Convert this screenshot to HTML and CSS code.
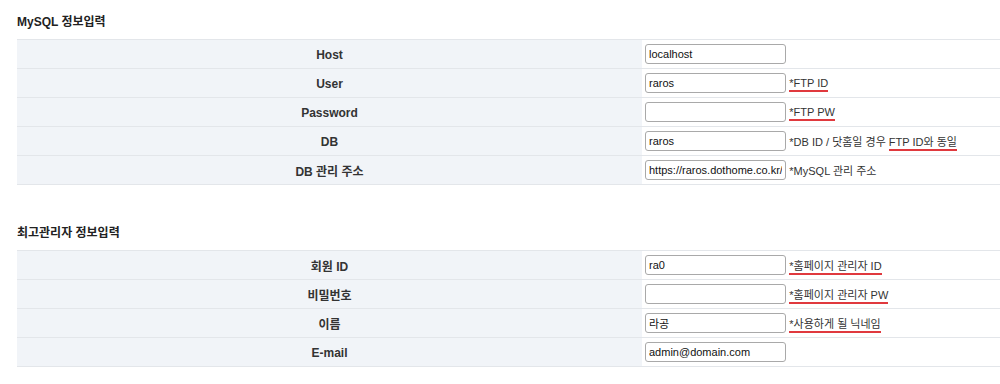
FILE: index.html
```html
<!DOCTYPE html>
<html lang="ko">
<head>
  <meta charset="UTF-8">
  <title>설치 - 정보입력</title>
  <link rel="stylesheet" href="styles.css">
</head>
<body>
  <div class="section">
    <h2>MySQL 정보입력</h2>
    <table class="form">
      <tr>
        <th>Host</th>
        <td><input type="text" value="localhost"></td>
      </tr>
      <tr>
        <th>User</th>
        <td><input type="text" value="raros"> <span class="hint mark">*FTP ID</span></td>
      </tr>
      <tr>
        <th>Password</th>
        <td><input type="password" value=""> <span class="hint mark">*FTP PW</span></td>
      </tr>
      <tr>
        <th>DB</th>
        <td><input type="text" value="raros"> <span class="hint">*DB ID / 닷홈일 경우 <span class="mark">FTP ID와 동일</span></span></td>
      </tr>
      <tr>
        <th>DB 관리 주소</th>
        <td><input type="text" value="https://raros.dothome.co.kr/myadmin"> <span class="hint">*MySQL 관리 주소</span></td>
      </tr>
    </table>
  </div>

  <div class="section">
    <h2>최고관리자 정보입력</h2>
    <table class="form">
      <tr>
        <th>회원 ID</th>
        <td><input type="text" value="ra0"> <span class="hint mark">*홈페이지 관리자 ID</span></td>
      </tr>
      <tr>
        <th>비밀번호</th>
        <td><input type="password" value=""> <span class="hint mark">*홈페이지 관리자 PW</span></td>
      </tr>
      <tr>
        <th>이름</th>
        <td><input type="text" value="라공"> <span class="hint mark">*사용하게 될 닉네임</span></td>
      </tr>
      <tr>
        <th>E-mail</th>
        <td><input type="text" value="admin@domain.com"></td>
      </tr>
    </table>
  </div>
</body>
</html>
```

FILE: styles.css
```css
body {
  margin: 0;
  padding: 14px 0 0 17px;
  font-family: 'Liberation Sans', 'Noto Sans CJK KR', sans-serif;
  font-size: 12px;
  color: #222;
  background: #fff;
}
.section + .section {
  margin-top: 40px;
}
h2 {
  margin: 0 0 9px;
  font-size: 12px;
  line-height: 16px;
  font-weight: bold;
  color: #222;
}
.form {
  width: 983px;
  border-collapse: collapse;
  border-top: 1px solid #e3e6ea;
}
.form tr {
  height: 29px;
  border-bottom: 1px solid #e3e6ea;
}
.form th {
  width: 625px;
  padding: 1px 0 0;
  background: #f1f4f8;
  font-weight: bold;
  color: #333;
  text-align: center;
}
.form td {
  padding: 0 0 0 3px;
  white-space: nowrap;
}
.form input {
  box-sizing: border-box;
  width: 141px;
  height: 20px;
  padding: 0 3px;
  border: 1px solid #a9a9a9;
  border-radius: 3px;
  font-family: 'Liberation Sans', 'Noto Sans CJK KR', sans-serif;
  font-size: 11px;
  color: #111;
  vertical-align: middle;
}
.hint {
  font-size: 11px;
  color: #333;
  vertical-align: middle;
}
.mark {
  padding-bottom: 1px;
  border-bottom: 2px solid #e0393e;
}
```
